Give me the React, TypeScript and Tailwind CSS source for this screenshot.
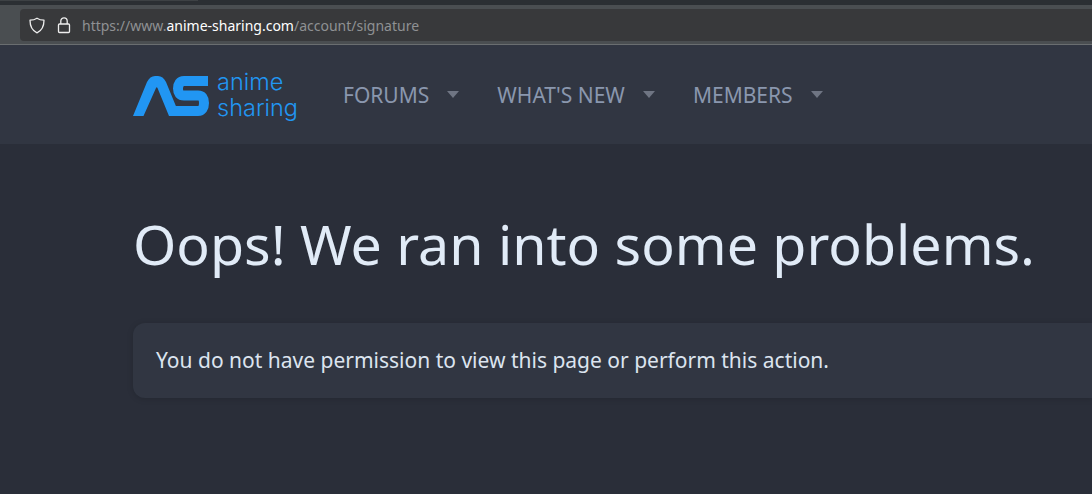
import React from 'react';

const navItems = ['FORUMS', "WHAT'S NEW", 'MEMBERS'];

const Logo = () => (
  <div className="flex items-center w-[165px] h-[52px] shrink-0">
    <svg width="76" height="44" viewBox="0 0 76 44" className="shrink-0">
      <path d="M0 43 L14 9 Q17 3 22 3 L25 3 Q30 3 33 9 L47 43 L36 43 L24.5 15 Q23.7 13.5 23 15 L10.5 43 Z" fill="#2196f3" />
      <path d="M75 8 L51 8 C47 8 45 11 45 15.5 C45 20 47 22.5 51 22.5 L65 22.5 C69 22.5 71 25 71 30 C71 35 69 38 65 38 L37 38" fill="none" stroke="#2196f3" strokeWidth="10" />
    </svg>
    <div className="ml-[8px] text-[#2196f3] font-['Inter',sans-serif] font-light text-[23.5px] leading-[26px]">
      <div>anime</div>
      <div>sharing</div>
    </div>
  </div>
);

export default function App() {
  return (
    <div className="w-[1092px] h-[494px] overflow-hidden bg-[#2a2e39] font-['Noto_Sans',sans-serif]">
      {/* browser bar */}
      <div className="h-[5px] bg-[#2b2f33]">
        <div className="w-[198px] h-px bg-[#3d4144]" />
      </div>
      <div className="h-[40px] bg-[#4a4e51] pl-[20px] pt-[4px] border-b border-[#6a6e70]">
        <div className="h-[32px] bg-[#38393b] rounded-l-[4px] flex items-center pl-[9px]">
          <svg width="16" height="17" viewBox="0 0 16 17" fill="none" stroke="#eeeeee" strokeWidth="1.3" strokeLinejoin="round">
            <path d="M8 1.2 C10 2.6 12.5 3.2 15 3.2 C15 9 13 13.5 8 15.8 C3 13.5 1 9 1 3.2 C3.5 3.2 6 2.6 8 1.2 Z" />
          </svg>
          <svg width="14" height="18" viewBox="0 0 14 18" fill="none" stroke="#eeeeee" strokeWidth="1.3" className="ml-[12px]">
            <rect x="1.5" y="8" width="11" height="8.5" rx="1" />
            <path d="M3.8 8 V5 a3.2 3.2 0 0 1 6.4 0 V8" />
          </svg>
          <div className="ml-[11px] text-[14px] text-[#8f9193] whitespace-nowrap">
            https://www.<span className="text-white">anime-sharing.com</span>/account/signature
          </div>
        </div>
      </div>

      {/* site nav */}
      <div className="h-[99px] bg-[#313642] flex items-center pl-[133px]">
        <Logo />
        <div className="flex ml-[45px] gap-[38px]">
          {navItems.map((item) => (
            <div key={item} className="flex items-center gap-[18px] text-[21px] leading-[30px] text-[#8a97ae] whitespace-nowrap">
              {item}
              <span className="w-0 h-0 border-x-[6.5px] border-x-transparent border-t-[7px] border-t-[#6f7583]" />
            </div>
          ))}
        </div>
      </div>

      {/* error content */}
      <div className="pl-[133px]">
        <h1 className="mt-[64px] text-[55.5px] leading-[72px] text-[#e1ebf7] whitespace-nowrap">
          Oops! We ran into some problems.
        </h1>
        <div className="mt-[43px] h-[75px] bg-[#313642] rounded-l-[12px] pl-[23px] flex items-center text-[21px] text-[#dce4ef] whitespace-nowrap shadow-[0_1px_6px_rgba(0,0,0,0.15)]">
          You do not have permission to view this page or perform this action.
        </div>
      </div>
    </div>
  );
}
